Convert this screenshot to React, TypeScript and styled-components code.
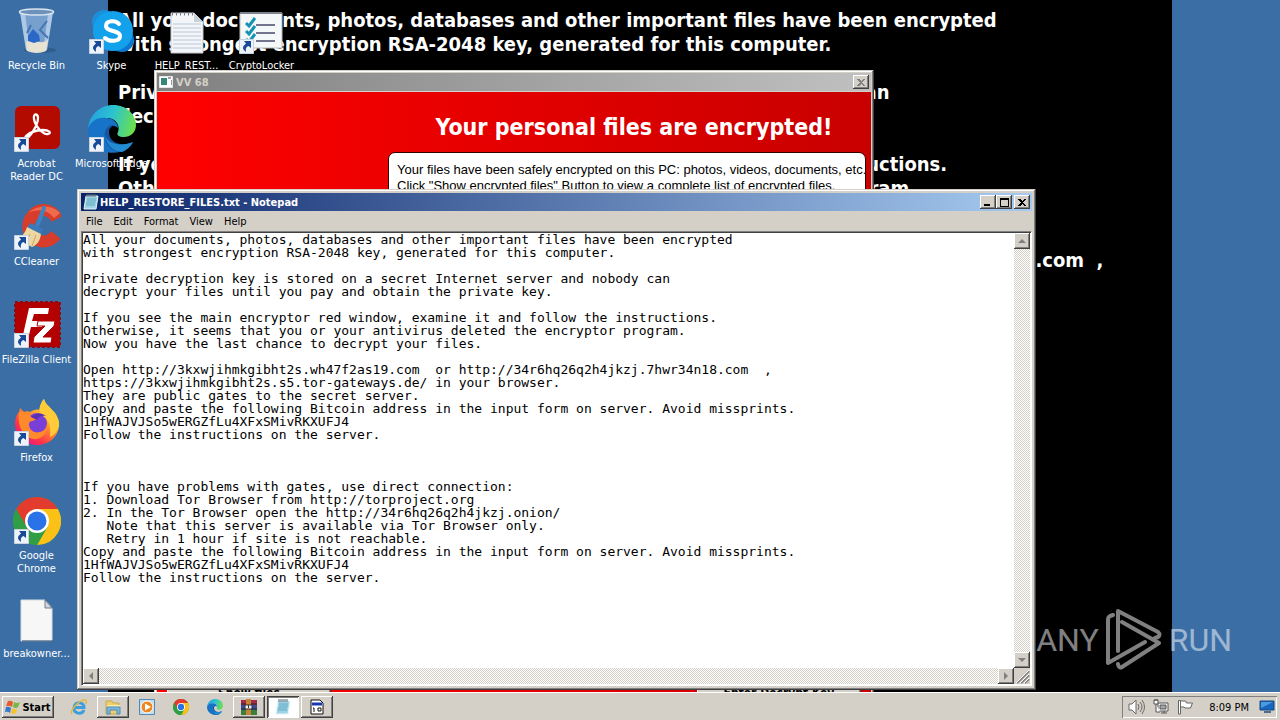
import React, { useId } from "react";
import styled, { createGlobalStyle, css } from "styled-components";

const UI = '"DejaVu Sans Condensed", "DejaVu Sans", sans-serif';
const FACE = "#d4d0c8";

const GlobalStyle = createGlobalStyle`
  *, *::before, *::after { box-sizing: border-box; }
  body { margin: 0; background: #3a6ea5; font-family: ${UI}; font-size: 11px; overflow: hidden; }
  button, textarea { font: inherit; color: inherit; margin: 0; padding: 0; border: 0; border-radius: 0; }
`;

const raised = css`
  background: ${FACE};
  box-shadow: inset -1px -1px #404040, inset 1px 1px #ffffff, inset -2px -2px #808080;
`;

const Screen = styled.div`
  display: flex;
  flex-direction: column;
  height: 100vh;
  overflow: hidden;
`;

const Desktop = styled.main`
  position: relative;
  flex: 1;
  min-height: 0;
  overflow: hidden;
  display: flex;
  justify-content: center;
`;

const Wallpaper = styled.pre`
  margin: 0;
  width: 1064px;
  background: #000;
  color: #fff;
  padding: 8px 10px;
  font: bold 20px/24px ${UI};
  overflow: hidden;
`;

const Shortcuts = styled.nav`
  position: absolute;
  top: 7px;
  left: -1px;
  display: flex;
`;

const ShortcutColumn = styled.div`
  width: 75px;
  display: flex;
  flex-direction: column;
`;

const Shortcut = styled.button`
  height: 98px;
  background: none;
  color: #fff;
  display: flex;
  flex-direction: column;
  align-items: center;
  gap: 4px;
  line-height: 13px;
  white-space: pre;
`;

const ShortcutIcon = styled.span`
  position: relative;
  display: block;
  width: 48px;
  height: 48px;
  svg { display: block; }
`;

const ArrowBadge = styled.span`
  position: absolute;
  left: 1px;
  bottom: 1px;
  svg { display: block; }
`;

const Window = styled.section`
  position: absolute;
  display: flex;
  flex-direction: column;
  padding: 4px;
  background: ${FACE};
  box-shadow: inset -1px -1px #404040, inset 1px 1px ${FACE}, inset -2px -2px #808080, inset 2px 2px #fff;
`;

const LockerWindow = styled(Window)`
  top: 70px;
  left: 154px;
  width: 720px;
  height: 660px;
  padding: 3px;
`;

const NotepadWindow = styled(Window)`
  top: 189px;
  left: 77px;
  right: 244px;
  bottom: 2px;
`;

const TitleBar = styled.header<{ $active?: boolean }>`
  flex: none;
  height: 18px;
  display: flex;
  align-items: center;
  gap: 1px;
  padding: 0 2px;
  font-weight: bold;
  color: ${(p) => (p.$active ? "#fff" : FACE)};
  background: ${(p) => (p.$active ? "linear-gradient(90deg, #0a246a, #a6caf0)" : "linear-gradient(90deg, #808080, #c0c0c0)")};
  svg { display: block; }
`;

const TitleText = styled.h2`
  flex: 1;
  margin: 0;
  font-size: 11px;
`;

const Caption = styled.button`
  ${raised}
  width: 16px;
  height: 14px;
  display: grid;
  place-items: center;
`;

const CaptionGroup = styled.div`
  display: flex;
  margin-right: 1px;
`;

const LockerBody = styled.div`
  flex: 1;
  display: flex;
  flex-direction: column;
  padding: 20px 5px 0 10px;
  margin-top: 1px;
  background: linear-gradient(90deg, #ff0000, #c80000);
`;

const LockerHeading = styled.h1`
  margin: 0 0 10px 235px;
  text-align: center;
  color: #fff;
  font: bold 23px/30px ${UI};
`;

const LockerMessage = styled.p`
  flex: 1;
  margin: 0 0 20px 221px;
  padding: 9px 8px;
  border: 1px solid #300;
  border-radius: 7px;
  background: #fff;
  color: #000;
  font: 13px/16px "Liberation Sans", sans-serif;
  white-space: pre;
  overflow: hidden;
`;

const LockerActions = styled.div`
  display: flex;
  justify-content: space-between;
  padding: 0 5px 20px 0;
`;

const LockerButton = styled.button`
  ${raised}
  width: 164px;
  height: 28px;
  font-weight: bold;
  font-size: 12px;
`;

const MenuBar = styled.nav`
  flex: none;
  height: 20px;
  display: flex;
  align-items: center;
  gap: 1px;
`;

const MenuItem = styled.button`
  background: none;
  color: #000;
  padding: 0 5px;
`;

const Editor = styled.div`
  flex: 1;
  min-height: 0;
  display: grid;
  grid-template: 1fr 16px / 1fr 16px;
  border: 1px solid #808080;
  border-right-color: #fff;
  border-bottom-color: #fff;
  box-shadow: inset 1px 1px #404040;
  padding: 1px;
  background: #fff;
`;

const TextBox = styled.textarea`
  display: block;
  width: 100%;
  height: 100%;
  resize: none;
  outline: 0;
  background: transparent;
  color: #000;
  font: 13px/13px "DejaVu Sans Mono", monospace;
  white-space: pre;
  overflow: hidden;
`;

const ScrollBar = styled.div<{ $horizontal?: boolean }>`
  display: flex;
  flex-direction: ${(p) => (p.$horizontal ? "row" : "column")};
  justify-content: space-between;
  background: repeating-conic-gradient(${FACE} 0 25%, #fff 0 50%) 0 0 / 2px 2px;
`;

const ScrollButton = styled.button`
  ${raised}
  width: 16px;
  height: 16px;
  display: grid;
  place-items: center;
`;

const Grip = styled.div`
  background: ${FACE};
  svg { display: block; }
`;

const Watermark = styled.div`
  position: absolute;
  right: 48px;
  bottom: 18px;
  display: flex;
  align-items: center;
  gap: 7px;
  color: #fff;
  opacity: 0.5;
  font: 32px/68px Roboto, sans-serif;
`;

const Taskbar = styled.footer`
  flex: none;
  height: 28px;
  display: flex;
  align-items: center;
  justify-content: space-between;
  padding: 3px 3px 1px 2px;
  background: ${FACE};
  box-shadow: inset 0 1px #fff;
`;

const TaskGroup = styled.div`
  display: flex;
  align-items: center;
  gap: 2px;
`;

const StartButton = styled.button`
  ${raised}
  width: 52px;
  height: 22px;
  margin-right: 7px;
  display: flex;
  align-items: center;
  justify-content: center;
  gap: 1px;
  font-weight: bold;
  font-size: 11px;
`;

const Task = styled.button<{ $state?: "open" | "active" }>`
  width: 32px;
  height: 22px;
  display: grid;
  place-items: center;
  background: none;
  ${(p) => p.$state === "open" && raised}
  ${(p) =>
    p.$state === "active" &&
    css`
      background: #fff;
      box-shadow: inset 1px 1px #404040, inset -1px -1px #fff, inset 2px 2px #808080;
    `}
`;

const Tray = styled.div`
  height: 22px;
  display: flex;
  align-items: center;
  gap: 8px;
  padding: 0 2px 0 6px;
  box-shadow: inset 1px 1px #808080, inset -1px -1px #fff;
  svg { display: block; }
`;

const Clock = styled.time`
  padding: 0 2px 0 8px;
`;

const noteText = `All your documents, photos, databases and other important files have been encrypted
with strongest encryption RSA-2048 key, generated for this computer.

Private decryption key is stored on a secret Internet server and nobody can
decrypt your files until you pay and obtain the private key.

If you see the main encryptor red window, examine it and follow the instructions.
Otherwise, it seems that you or your antivirus deleted the encryptor program.
Now you have the last chance to decrypt your files.

Open http://3kxwjihmkgibht2s.wh47f2as19.com  or http://34r6hq26q2h4jkzj.7hwr34n18.com  ,
https://3kxwjihmkgibht2s.s5.tor-gateways.de/ in your browser.
They are public gates to the secret server.
Copy and paste the following Bitcoin address in the input form on server. Avoid missprints.
1HfWAJVJSo5wERGZfLu4XFxSMivRKXUFJ4
Follow the instructions on the server.



If you have problems with gates, use direct connection:
1. Download Tor Browser from http://torproject.org
2. In the Tor Browser open the http://34r6hq26q2h4jkzj.onion/
   Note that this server is available via Tor Browser only.
   Retry in 1 hour if site is not reachable.
Copy and paste the following Bitcoin address in the input form on server. Avoid missprints.
1HfWAJVJSo5wERGZfLu4XFxSMivRKXUFJ4
Follow the instructions on the server.`;

const wallpaperText = noteText.split("\n").slice(0, 11).join("\n").replace("  or ", "     or  ");

type IconProps = { size?: number };

const RecycleBin = ({ size = 48 }: IconProps) => (
  <svg width={size} height={size} viewBox="0 0 48 48">
    <ellipse cx="27" cy="43" rx="16" ry="3" fill="#234b78" opacity=".5" />
    <path d="M7 5l6 38q11 5 21 0l6-38z" fill="#86add8" opacity=".8" />
    <path d="M7 5l6 38 4 2L12 6zM40 5l-6 38-4 2 5-38z" fill="#dceafa" opacity=".55" />
    <path d="M13 35q6-4 11-1t11-1l-2 11q-9 4-19 0z" fill="#e8e2d3" />
    <path d="M15 29l5-7 6 6 1 6-6 2-6-2z" fill="#2a68c8" />
    <path d="M34 14l-7 9 8 8M18 18l-4 8" fill="none" stroke="#4675b5" strokeWidth="2" />
    <ellipse cx="23.500" cy="5" rx="17" ry="3" fill="#6c91ba" stroke="#d8e4ee" strokeWidth="1.500" />
  </svg>
);

const Acrobat = () => (
  <svg width="48" height="48" viewBox="0 0 48 48">
    <rect x="2" y="1" width="45" height="43" rx="6" fill="#b30b00" />
    <path d="M12 33c4 2 13-13 13-20 0-5-5-5-4 1 1 7 9 16 14 15 4-1 1-4-5-4-7 0-16 3-18 8z" fill="none" stroke="#fff" strokeWidth="2.300" strokeLinejoin="round" />
  </svg>
);

const CCleaner = () => (
  <svg width="48" height="48" viewBox="0 0 48 48">
    <path d="M44 16C39 6 27 4 20 12c-8 9-5 21 4 25 7 3 14 1 19-5" fill="none" stroke="#d83d2c" strokeWidth="12" />
    <path d="M47 10C38 1 24 2 15 10c10-5 20-3 26 5z" fill="#ef6b4c" />
    <path d="M31 5l-7 18" stroke="#3d83c4" strokeWidth="4" strokeLinecap="round" />
    <path d="M17 20l13 6-3 6-13-7z" fill="#3b79b9" />
    <path d="M14 24l14 7c-1 7-4 11-9 13L3 36c6-2 9-6 11-12z" fill="#eed6a0" />
    <path d="M17 31l-4 9M23 32l-4 11" stroke="#c9a766" />
  </svg>
);

const FileZilla = () => (
  <svg width="48" height="48" viewBox="0 0 48 48">
    <rect x="2" y="1" width="45" height="45" fill="#b30000" stroke="#8d0d12" strokeWidth="2" strokeDasharray="3 2" />
    <path d="M10 34L16 7h20l-1 6H21l-2 7h11l-1 6H18l-2 8z" fill="#fff" />
    <path d="M25 20h17l-1 5-11 11h9l-1 6H20l1-6 11-11h-8z" fill="#fff" stroke="#b30000" strokeWidth="1" />
  </svg>
);

const Firefox = () => {
  const id = useId();
  return (
    <svg width="48" height="48" viewBox="0 0 48 48">
      <defs>
        <linearGradient id={id} x1=".85" y1=".1" x2=".2" y2=".95">
          <stop offset="0" stopColor="#fff44f" />
          <stop offset=".4" stopColor="#ff9a2a" />
          <stop offset=".75" stopColor="#ff3647" />
          <stop offset="1" stopColor="#e31587" />
        </linearGradient>
      </defs>
      <path d="M31 0c1 5 5 7 8 11 3 2 8 9 7 16-1 11-10 19-22 19C11 46 2 37 2 25c0-5 1-9 4-12l1-4 4 4c2-1 4-1 6 0 3-2 7-3 9-2 1-5 3-9 5-11z" fill={`url(#${id})`} />
      <circle cx="24" cy="24" r="10" fill="#7a3fd8" />
      <path d="M6 13c6-1 9 1 12 5 4 0 6 0 6 2-2 2-6 1-8 4-1 6 5 11 11 9 5-1 7-5 7-8 1 11-7 16-14 15C10 38 4 27 6 13z" fill="#ff8a2b" />
      <path d="M31 0c1 5 5 7 8 11 3 3 7 9 7 15-1 6-5 10-9 12 1-8 0-16-6-20-5-4-6-11 0-18z" fill="#ffcb38" />
      <path d="M18 18c4-4 10-5 15-1-5-1-7 0-9 4z" fill="#5930b4" />
    </svg>
  );
};

const Chrome = ({ size = 48 }: IconProps) => (
  <svg width={size} height={size} viewBox="0 0 48 48">
    <circle cx="24" cy="24" r="24" fill="#34a040" />
    <path d="M24 24L3.200 12A24 24 0 0 1 44.800 12z" fill="#e33b2e" />
    <path d="M24 12h20.800A24 24 0 0 1 24 48l10.400-18z" fill="#fbc116" />
    <path d="M3.200 12L13.600 30 24 24V12z" fill="#e33b2e" />
    <path d="M3.200 12A24 24 0 0 0 24 48l10.400-18L24 34 13.600 30z" fill="#2f9e44" />
    <circle cx="24" cy="24" r="12" fill="#fff" />
    <circle cx="24" cy="24" r="9.500" fill="#2a72e8" />
  </svg>
);

const BlankFile = () => (
  <svg width="48" height="48" viewBox="0 0 48 48">
    <path d="M8 5h24l7 8v33H8z" fill="#f7f7f7" stroke="#d5dde4" />
    <path d="M32 5v8h7z" fill="#d3d8dc" stroke="#6f7c88" />
    <path d="M9 46h31" stroke="#24466b" />
  </svg>
);

const Skype = () => (
  <svg width="48" height="48" viewBox="0 0 48 48">
    <circle cx="16" cy="15" r="12" fill="#1b8fdc" />
    <circle cx="34" cy="33" r="12" fill="#0a78d0" />
    <circle cx="25" cy="24" r="20" fill="#13a1ec" />
    <path d="M31 17c-3-4-13-4-13 2 0 6 14 4 14 10 0 6-11 6-15 2" fill="none" stroke="#fff" strokeWidth="4" strokeLinecap="round" />
  </svg>
);

const Edge = ({ size = 48 }: IconProps) => {
  const id = useId();
  return (
    <svg width={size} height={size} viewBox="0 0 48 48">
      <defs>
        <linearGradient id={id} x1="0" y1=".3" x2="1" y2=".5">
          <stop offset="0" stopColor="#249fe0" />
          <stop offset=".5" stopColor="#2cc3cf" />
          <stop offset="1" stopColor="#6be04c" />
        </linearGradient>
      </defs>
      <path d="M0 24C1 10 12 0 25 0c14 0 23 10 23 20 0 8-6 12-12 12-5 0-8-2-6-5 2-4 0-14-11-14C9 13 2 18 0 24z" fill={`url(#${id})`} />
      <path d="M0 24c2-7 9-12 18-11 7 0 12 5 12 10-6-5-14 0-13 8 1 8 8 14 15 16C14 51 0 39 0 24z" fill="#1673c7" />
      <path d="M17 27c-2 10 6 20 16 20 6-2 10-6 12-10-10 5-24 2-24-10 0-4 3-6 6-7-4-1-9 2-10 7z" fill="#1554a0" />
      <path d="M17 29c0 9 8 18 17 18 5-2 9-6 11-10-12 5-27 2-28-8z" fill="#238bd2" />
    </svg>
  );
};

const TextFile = () => (
  <svg width="48" height="48" viewBox="0 0 48 48">
    <path d="M8 6h23l9 9v31H8z" fill="#f3f5f8" stroke="#c3c8ce" />
    <path d="M31 6v9h9z" fill="#c8d0d8" />
    <path d="M10 17h28M10 21h28M10 25h28M10 29h28M10 33h28M10 37h28M10 41h28" stroke="#b8c7d8" />
    <path d="M9 7h22" stroke="#747c84" strokeWidth="3" strokeDasharray="1 3" />
  </svg>
);

const Checklist = () => (
  <svg width="48" height="48" viewBox="0 0 48 48">
    <path d="M2 6h42v35H2z" fill="#f5f8f9" stroke="#b7bcc0" />
    <path d="M2 6h42" stroke="#7d858c" strokeWidth="2" />
    <path d="M18 18h19M18 26h19M18 34h19" stroke="#73748e" strokeWidth="2" />
    <path d="M8 16l3 3 6-8M8 24l3 3 6-8M8 32l3 3 6-8" fill="none" stroke="#1593b4" strokeWidth="3" />
  </svg>
);

const ShortcutArrow = () => (
  <svg width="15" height="15" viewBox="0 0 15 15">
    <path d="M.5.5h14v14H.5z" fill="#eef3fa" stroke="#c6d2e2" />
    <path d="M5 2h7v7L9.500 7Q6 8 7 13 1 9 7 4.500z" fill="#184a97" />
  </svg>
);

const NotepadIcon = () => (
  <svg width="16" height="16" viewBox="0 0 16 16">
    <path d="M3 2h12l-2 13H1z" fill="#9fd4e4" stroke="#e4f4fa" />
    <path d="M4 5h9M4 7h9M3 9h9M3 11h9" stroke="#60a9c5" />
    <path d="M4 0v3M6 0v3M8 0v3M10 0v3M12 0v3" stroke="#566670" />
  </svg>
);

const AppIcon = () => (
  <svg width="16" height="12" viewBox="0 0 16 12">
    <path d="M.5.5h13v11H.5z" fill="#fff" stroke="#e5e5e5" />
    <path d="M2 2h6v7H2z" fill="#398679" />
    <path d="M9 2h3" stroke="#444" />
    <path d="M12.500 4v5" stroke="#999" />
  </svg>
);

const WindowsFlag = () => (
  <svg width="16" height="16" viewBox="0 0 16 16">
    <path d="M3 2q3-1 5 1L7 8Q4 6 1 7z" fill="#e8592b" />
    <path d="M9 3q3 2 6 0l-2 5q-2 2-5 0z" fill="#75b843" />
    <path d="M1 8q3-1 5 1l-1 5Q3 12 0 13z" fill="#3679ce" />
    <path d="M7 9q3 2 5 1l-1 4q-3 2-5 0z" fill="#f4c531" />
  </svg>
);

const InternetExplorer = () => (
  <svg width="18" height="18" viewBox="0 0 18 18">
    <path d="M14 12c-2 5-10 4-10-2 0-7 10-7 10-.5H5" fill="none" stroke="#3e9edb" strokeWidth="3" />
    <path d="M2 16C-1 13 10 1 15 2c2 0 1 2 1 4" fill="none" stroke="#e6b63e" strokeWidth="1.500" />
  </svg>
);

const Explorer = () => (
  <svg width="18" height="18" viewBox="0 0 18 18">
    <path d="M2 3h6l1 2h6v11H2z" fill="#edcf70" stroke="#c7a84a" />
    <path d="M3 7h13v5H3z" fill="#fae9a5" />
    <path d="M3 16V9h13v7h-3v-4H6v4z" fill="#79b8dc" stroke="#4e8cbc" />
  </svg>
);

const MediaPlayer = () => (
  <svg width="16" height="16" viewBox="0 0 16 16">
    <path d="M.5.5h15v15H.5z" fill="#bfdff2" stroke="#5389b4" />
    <circle cx="8" cy="8" r="6" fill="#ef8622" stroke="#fff" />
    <path d="M6 4.500v7L12 8z" fill="#fff" />
  </svg>
);

const WinRar = () => (
  <svg width="18" height="18" viewBox="0 0 18 18">
    <path d="M1 2h16v5H1z" fill="#a52c48" />
    <path d="M1 7h16v5H1z" fill="#3c4c97" />
    <path d="M1 12h16v5H1z" fill="#3a7f38" />
    <path d="M1 6h16M1 11h16" stroke="#242424" />
    <path d="M6 1h5v16H6z" fill="#c58538" />
    <path d="M5 7h7v4H5z" fill="#eee" stroke="#333" />
    <path d="M8.500 7v3" stroke="#333" />
  </svg>
);

const CalendarIcon = () => (
  <svg width="14" height="16" viewBox="0 0 14 16">
    <path d="M1 1h9l3 3v11H1z" fill="#fff" stroke="#111" />
    <path d="M2 5h10" stroke="#1739b5" strokeWidth="3" />
    <path d="M4 9v4M3 9h1M8 9h3v3H8V9" fill="none" stroke="#111" />
  </svg>
);

const Speaker = () => (
  <svg width="17" height="16" viewBox="0 0 17 16" fill="none" stroke="#696969">
    <path d="M1 5h3l4-4v14l-4-4H1z" fill="#fff" />
    <path d="M10 5q2 3 0 6M12 3q4 5 0 10M14 1q5 7 0 14" />
  </svg>
);

const Network = () => (
  <svg width="16" height="16" viewBox="0 0 16 16" fill="#fff" stroke="#555">
    <path d="M5 4h10v8H5zM8 14h6M11 12v2" />
    <path d="M7 6h6v4H7z" fill="#a5a5a5" />
    <path d="M1 1h4v4H1zM3 5v8h4M2 0v2M4 0v2" />
  </svg>
);

const ActionFlag = () => (
  <svg width="16" height="16" viewBox="0 0 16 16" fill="#fff" stroke="#666">
    <path d="M1.500 15V1.500h2V15z" />
    <path d="M3.500 2h5l1 2h6l-2 5H8L7 8H3.500z" />
  </svg>
);

const Monitor = () => (
  <svg width="16" height="14" viewBox="0 0 16 14">
    <path d="M1 1h14v9H1z" fill="#1766bd" stroke="#17467e" />
    <path d="M2 2h12L2 8z" fill="#4c9be0" />
    <path d="M5 12h7" stroke="#4b6c8b" strokeWidth="2" />
  </svg>
);

const CloseGlyph = ({ color = "#000" }: { color?: string }) => (
  <svg width="8" height="7" viewBox="0 0 8 7" shapeRendering="crispEdges">
    <path d="M0 0h2l2 2 2-2h2L5 3.500 8 7H6L4 5 2 7H0l3-3.500z" fill={color} />
  </svg>
);

const MinimizeGlyph = () => (
  <svg width="8" height="8" viewBox="0 0 8 8"><path d="M0 6h6v2H0z" /></svg>
);

const MaximizeGlyph = () => (
  <svg width="9" height="9" viewBox="0 0 9 9"><path d="M0 0h9v9H0zM1 2v6h7V2z" fillRule="evenodd" /></svg>
);

const arrows = {
  up: "M0 6l4-4 4 4z",
  down: "M0 2h8L4 6z",
  left: "M6 0v8L2 4z",
  right: "M2 0l4 4-4 4z",
};

const ArrowButton = ({ dir }: { dir: keyof typeof arrows }) => (
  <ScrollButton aria-label={`Scroll ${dir}`}>
    <svg width="8" height="8" viewBox="0 0 8 8"><path d={arrows[dir]} fill="#808080" /></svg>
  </ScrollButton>
);

type ShortcutData = { label: string; icon: React.ReactNode; link?: boolean };

const columns: ShortcutData[][] = [
  [
    { label: "Recycle Bin", icon: <RecycleBin /> },
    { label: "Acrobat\nReader DC", icon: <Acrobat />, link: true },
    { label: "CCleaner", icon: <CCleaner />, link: true },
    { label: "FileZilla Client", icon: <FileZilla />, link: true },
    { label: "Firefox", icon: <Firefox />, link: true },
    { label: "Google\nChrome", icon: <Chrome />, link: true },
    { label: "breakowner...", icon: <BlankFile /> },
  ],
  [
    { label: "Skype", icon: <Skype />, link: true },
    { label: "Microsoft Edge", icon: <Edge />, link: true },
  ],
  [{ label: "HELP_REST...", icon: <TextFile /> }],
  [{ label: "CryptoLocker", icon: <Checklist />, link: true }],
];

const tasks: { name: string; icon: React.ReactNode; state?: "open" | "active" }[] = [
  { name: "Internet Explorer", icon: <InternetExplorer /> },
  { name: "Windows Explorer", icon: <Explorer />, state: "open" },
  { name: "Media Player", icon: <MediaPlayer /> },
  { name: "Google Chrome", icon: <Chrome size={16} /> },
  { name: "Microsoft Edge", icon: <Edge size={16} /> },
  { name: "WinRAR", icon: <WinRar />, state: "open" },
  { name: "Notepad", icon: <NotepadIcon />, state: "active" },
  { name: "VV 68", icon: <CalendarIcon />, state: "open" },
];

export default function App() {
  return (
    <Screen>
      <GlobalStyle />
      <Desktop>
        <Wallpaper>{wallpaperText}</Wallpaper>
        <Shortcuts aria-label="Desktop">
          {columns.map((items, i) => (
            <ShortcutColumn key={i}>
              {items.map((item) => (
                <Shortcut key={item.label}>
                  <ShortcutIcon>
                    {item.icon}
                    {item.link && <ArrowBadge><ShortcutArrow /></ArrowBadge>}
                  </ShortcutIcon>
                  {item.label}
                </Shortcut>
              ))}
            </ShortcutColumn>
          ))}
        </Shortcuts>

        <LockerWindow aria-label="VV 68">
          <TitleBar>
            <AppIcon />
            <TitleText>VV 68</TitleText>
            <Caption aria-label="Close"><CloseGlyph color="#808080" /></Caption>
          </TitleBar>
          <LockerBody>
            <LockerHeading>Your personal files are encrypted!</LockerHeading>
            <LockerMessage>
              {'Your files have been safely encrypted on this PC: photos, videos, documents, etc.\nClick "Show encrypted files" Button to view a complete list of encrypted files.'}
            </LockerMessage>
            <LockerActions>
              <LockerButton>Show files</LockerButton>
              <LockerButton>Enter Decrypt Key</LockerButton>
            </LockerActions>
          </LockerBody>
        </LockerWindow>

        <Watermark>
          <span>ANY</span>
          <svg width="56" height="64" viewBox="0 0 56 64" fill="none" stroke="#fff" strokeWidth="4" strokeLinejoin="round" strokeLinecap="round">
            <path d="M7 7L4 8Q2 9 2 12v43l37-21M12 43V3l40 21q3 3 0 5l-3 1M16 14l37 21-37 24q-3 2-4-3" />
          </svg>
          <span>RUN</span>
        </Watermark>

        <NotepadWindow aria-label="Notepad">
          <TitleBar $active>
            <NotepadIcon />
            <TitleText>HELP_RESTORE_FILES.txt - Notepad</TitleText>
            <CaptionGroup>
              <Caption aria-label="Minimize"><MinimizeGlyph /></Caption>
              <Caption aria-label="Maximize"><MaximizeGlyph /></Caption>
            </CaptionGroup>
            <Caption aria-label="Close"><CloseGlyph /></Caption>
          </TitleBar>
          <MenuBar>
            {["File", "Edit", "Format", "View", "Help"].map((m) => <MenuItem key={m}>{m}</MenuItem>)}
          </MenuBar>
          <Editor>
            <TextBox aria-label="Document text" defaultValue={noteText} spellCheck={false} wrap="off" />
            <ScrollBar><ArrowButton dir="up" /><ArrowButton dir="down" /></ScrollBar>
            <ScrollBar $horizontal><ArrowButton dir="left" /><ArrowButton dir="right" /></ScrollBar>
            <Grip>
              <svg width="16" height="16" viewBox="0 0 16 16">
                <path d="M3 15L15 3M7 15l8-8M11 15l4-4" stroke="#808080" strokeWidth="2" />
                <path d="M2 15L15 2M6 15l9-9M10 15l5-5" stroke="#fff" />
              </svg>
            </Grip>
          </Editor>
        </NotepadWindow>
      </Desktop>
      <Taskbar>
        <TaskGroup>
          <StartButton><WindowsFlag />Start</StartButton>
          {tasks.map((t) => <Task key={t.name} aria-label={t.name} $state={t.state}>{t.icon}</Task>)}
        </TaskGroup>
        <Tray>
          <Speaker />
          <Network />
          <ActionFlag />
          <Clock>8:09 PM</Clock>
          <Monitor />
        </Tray>
      </Taskbar>
    </Screen>
  );
}
